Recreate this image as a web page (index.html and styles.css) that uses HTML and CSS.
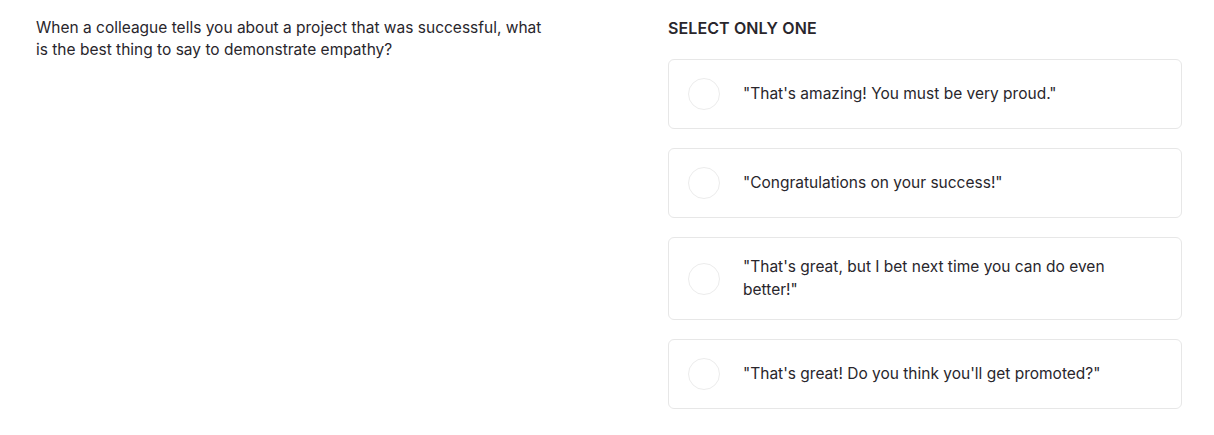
FILE: index.html
```html
<!DOCTYPE html>
<html lang="en">
<head>
<meta charset="utf-8">
<title>Question</title>
<link rel="stylesheet" href="styles.css">
</head>
<body>
<main class="quiz">
  <section class="question">
    <p class="prompt">When a colleague tells you about a project that was successful, what is the best thing to say to demonstrate empathy?</p>
  </section>
  <section class="answers">
    <h2 class="instruction">SELECT ONLY ONE</h2>
    <ul class="options">
      <li class="option"><span class="radio"></span><span class="label">"That's amazing! You must be very proud."</span></li>
      <li class="option"><span class="radio"></span><span class="label">"Congratulations on your success!"</span></li>
      <li class="option"><span class="radio"></span><span class="label">"That's great, but I bet next time you can do even better!"</span></li>
      <li class="option"><span class="radio"></span><span class="label">"That's great! Do you think you'll get promoted?"</span></li>
    </ul>
  </section>
</main>
</body>
</html>
```
FILE: styles.css
```css
* { box-sizing: border-box; }
html, body { margin: 0; padding: 0; background: #ffffff; }
body {
  font-family: Inter, "Liberation Sans", sans-serif;
  color: #29262c;
  font-size: 15.5px;
  line-height: 22px;
}
.quiz {
  display: grid;
  grid-template-columns: 1fr 514px;
  column-gap: 118px;
  padding: 17px 32px 0 36px;
}
.prompt { margin: 0; font-weight: 400; }
.instruction {
  margin: 0 0 20px;
  font-size: 16px;
  line-height: 22px;
  font-weight: 600;
  letter-spacing: 0.1px;
}
.options {
  list-style: none;
  margin: 0;
  padding: 0;
  display: flex;
  flex-direction: column;
  gap: 19px;
}
.option {
  display: flex;
  align-items: center;
  gap: 23px;
  border: 1px solid #e7e7e7;
  border-radius: 6px;
  padding: 18px 60px 18px 19px;
  min-height: 70px;
}
.radio {
  flex: none;
  width: 32px;
  height: 32px;
  border: 1.5px solid #ececec;
  border-radius: 50%;
}
.label { line-height: 22.5px; }
```
